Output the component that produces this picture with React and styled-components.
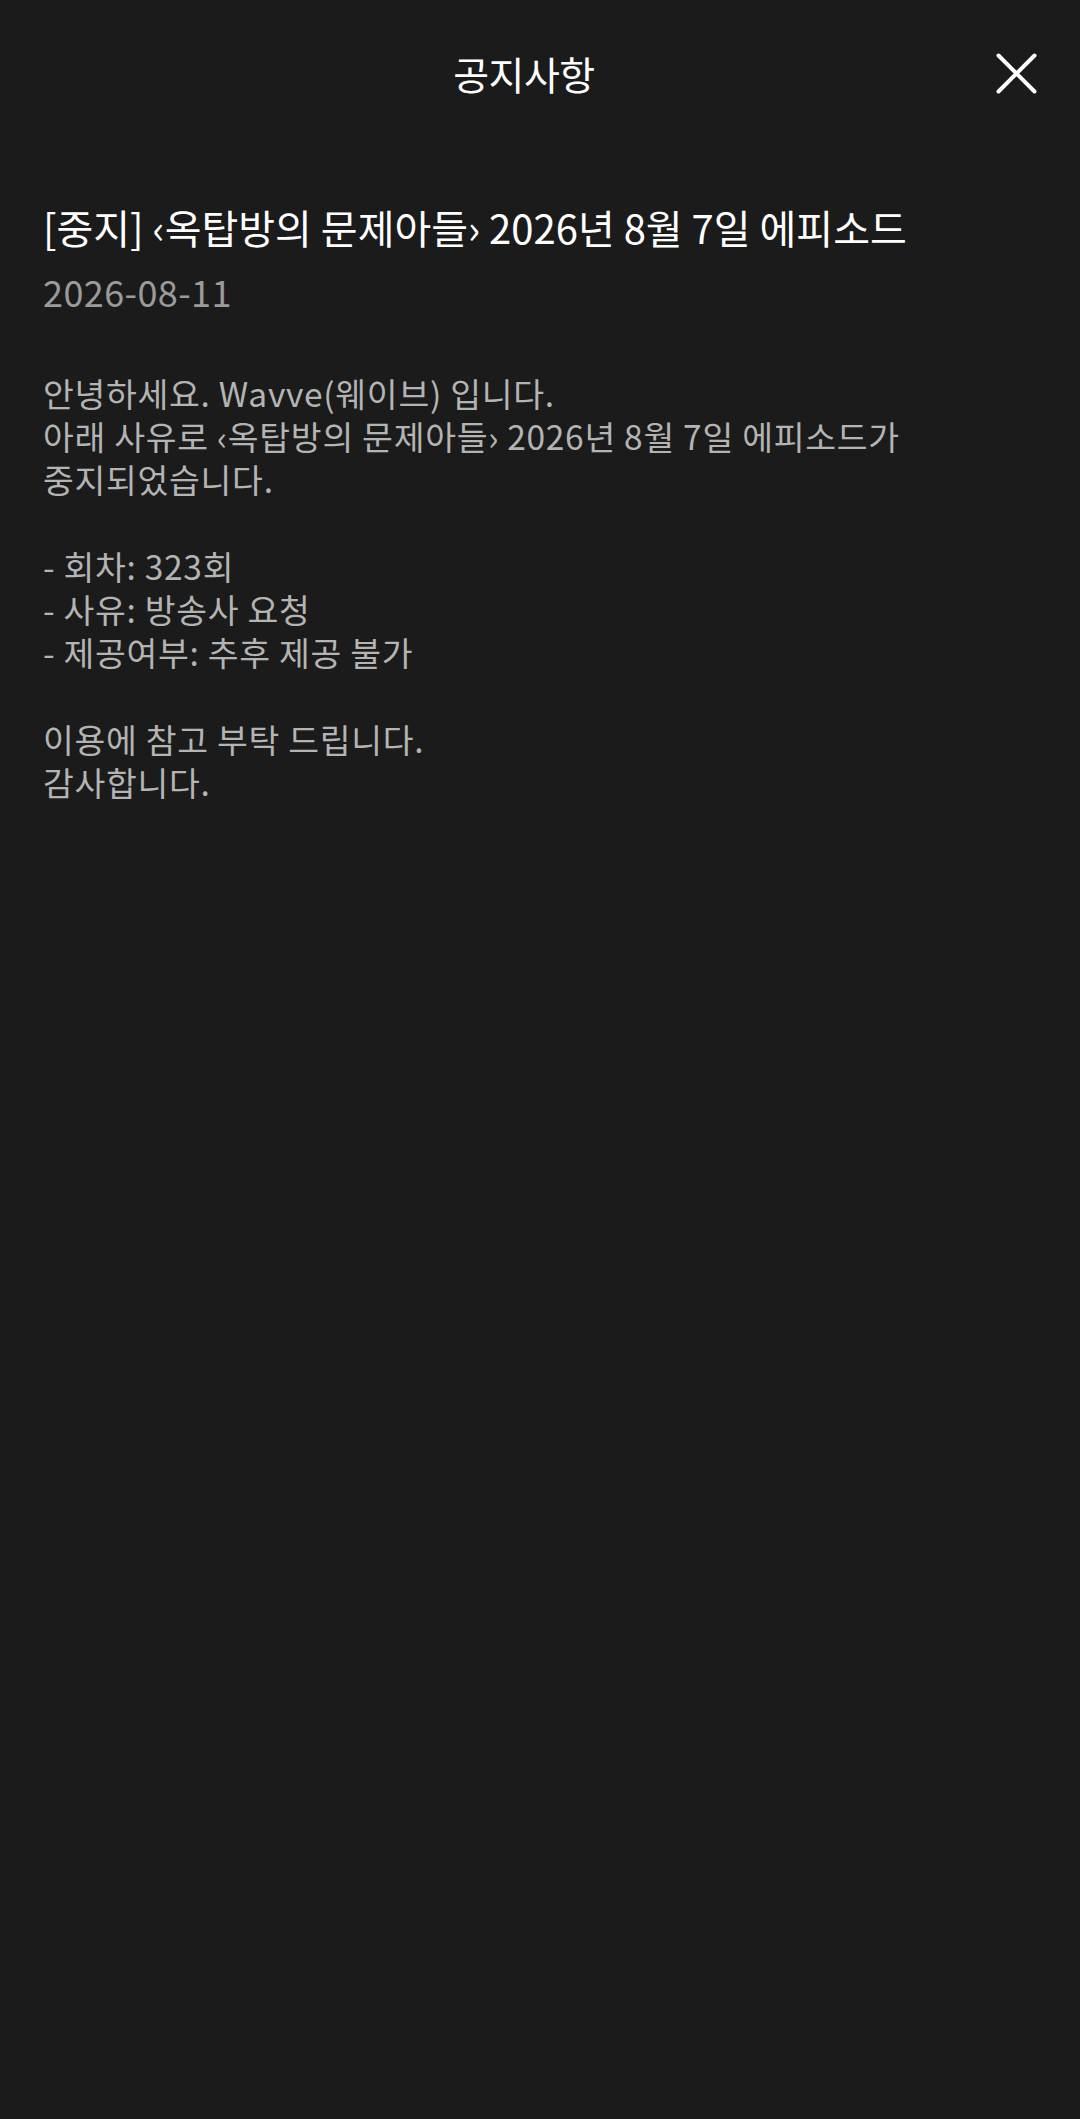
import React from "react";
import styled, { createGlobalStyle } from "styled-components";

const Global = createGlobalStyle`
  html, body {
    margin: 0;
    padding: 0;
    background: #1b1b1b;
  }
  body {
    font-family: "Noto Sans CJK KR", "Noto Sans", sans-serif;
    -webkit-font-smoothing: antialiased;
  }
`;

const Page = styled.div`
  width: 1080px;
  min-height: 2119px;
  background: #1b1b1b;
  display: flex;
  flex-direction: column;
`;

const Header = styled.header`
  height: 146px;
  display: grid;
  grid-template-columns: 1fr auto 1fr;
  align-items: center;
  padding-right: 32px;
`;

const HeaderTitle = styled.h1`
  grid-column: 2;
  margin: 0;
  font-size: 39px;
  line-height: 50px;
  font-weight: 400;
  letter-spacing: -0.5px;
  color: #ffffff;
`;

const CloseButton = styled.button`
  grid-column: 3;
  justify-self: end;
  width: 63px;
  height: 63px;
  padding: 0;
  border: none;
  background: transparent;
  display: flex;
  align-items: center;
  justify-content: center;
  cursor: pointer;
`;

const Content = styled.main`
  padding: 57px 43px 0 43px;
  display: flex;
  flex-direction: column;
`;

const NoticeTitle = styled.h2`
  margin: 0;
  font-size: 40px;
  line-height: 48px;
  font-weight: 400;
  letter-spacing: 0;
  color: #ffffff;
  white-space: nowrap;
`;

const NoticeDate = styled.div`
  margin-top: 18px;
  font-size: 36px;
  line-height: 44px;
  color: #9b9b9b;
  letter-spacing: 0.4px;
`;

const Body = styled.div`
  margin-top: 58px;
  font-size: 33.5px;
  line-height: 43.2px;
  color: #b4b4b4;
  white-space: pre-line;
  letter-spacing: 0.7px;
`;

const bodyText = `안녕하세요. Wavve(웨이브) 입니다.
아래 사유로 ‹옥탑방의 문제아들› 2026년 8월 7일 에피소드가
중지되었습니다.

- 회차: 323회
- 사유: 방송사 요청
- 제공여부: 추후 제공 불가

이용에 참고 부탁 드립니다.
감사합니다.`;

export default function App() {
  return (
    <>
      <Global />
      <Page>
        <Header>
          <HeaderTitle>공지사항</HeaderTitle>
          <CloseButton aria-label="닫기">
            <svg width="41" height="41" viewBox="0 0 41 41">
              <path
                d="M2.5 2.5 L38.5 38.5 M38.5 2.5 L2.5 38.5"
                stroke="#ffffff"
                strokeWidth="4"
                strokeLinecap="round"
                fill="none"
              />
            </svg>
          </CloseButton>
        </Header>
        <Content>
          <NoticeTitle>[중지] ‹옥탑방의 문제아들› 2026년 8월 7일 에피소드</NoticeTitle>
          <NoticeDate>2026-08-11</NoticeDate>
          <Body>{bodyText}</Body>
        </Content>
      </Page>
    </>
  );
}
